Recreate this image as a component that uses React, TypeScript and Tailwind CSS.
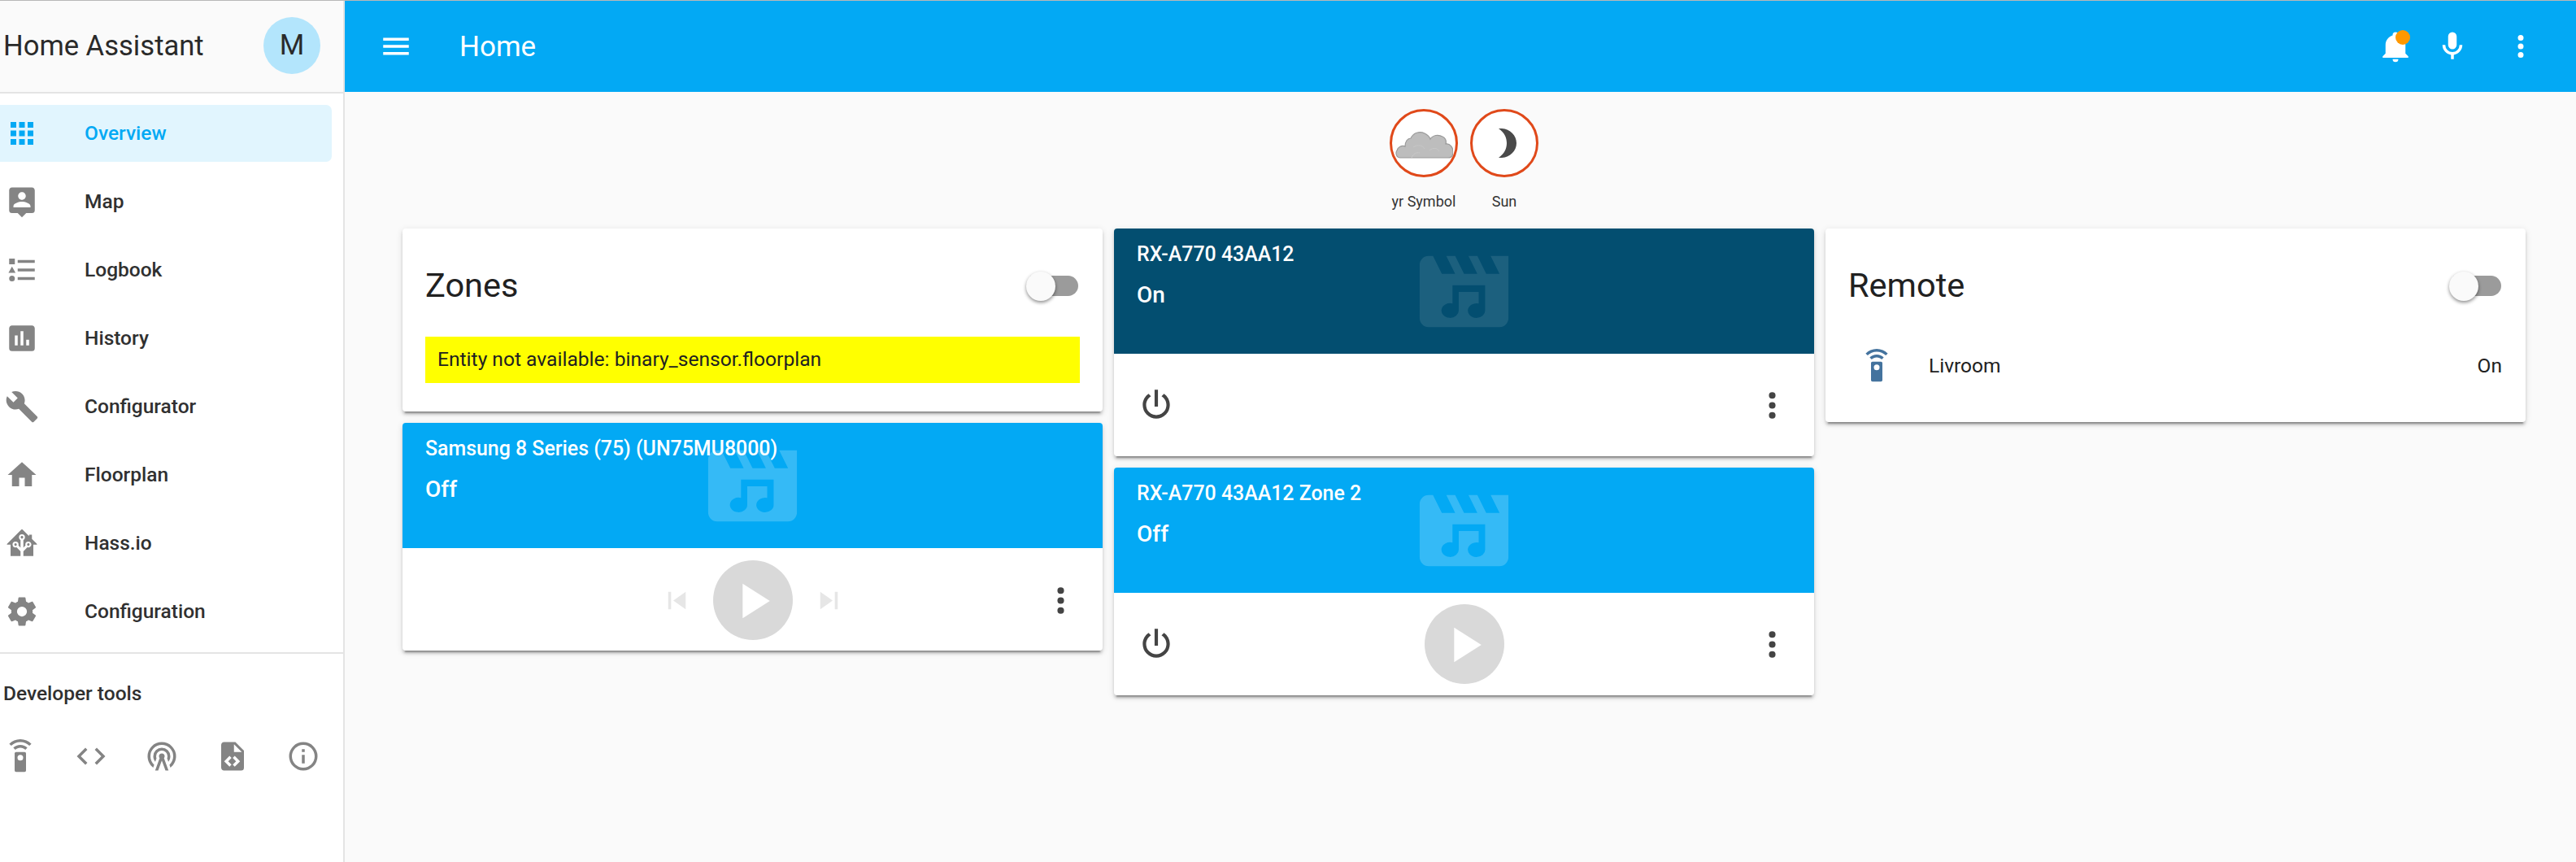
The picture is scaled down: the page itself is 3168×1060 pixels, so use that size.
import React from "react";

const P = {
  apps: "M16,20H20V16H16M16,14H20V10H16M10,8H14V4H10M16,8H20V4H16M10,14H14V10H10M4,14H8V10H4M4,20H8V16H4M10,20H14V16H10M4,8H8V4H4V8Z",
  map: "M18,16H6V15.1C6,13.1 10,12 12,12C14,12 18,13.1 18,15.1M12,5.3C13.5,5.3 14.7,6.5 14.7,8C14.7,9.5 13.5,10.7 12,10.7C10.5,10.7 9.3,9.5 9.3,8C9.3,6.5 10.5,5.3 12,5.3M19,2H5C3.89,2 3,2.89 3,4V18A2,2 0 0,0 5,20H9L12,23L15,20H19A2,2 0 0,0 21,18V4C21,2.89 20.1,2 19,2Z",
  list: "M5,9.5L7.5,14H2.5L5,9.5M3,4H7V8H3V4M5,20A2,2 0 0,0 7,18A2,2 0 0,0 5,16A2,2 0 0,0 3,18A2,2 0 0,0 5,20M9,5V7H21V5H9M9,19H21V17H9V19M9,13H21V11H9V13Z",
  poll: "M17,17H15V13H17M13,17H11V7H13M9,17H7V10H9M19,3H5C3.89,3 3,3.89 3,5V19A2,2 0 0,0 5,21H19A2,2 0 0,0 21,19V5C21,3.89 20.1,3 19,3Z",
  wrench: "M22.7,19L13.6,9.9C14.5,7.6 14,4.9 12.1,3C10.1,1 7.1,0.6 4.7,1.7L9,6L6,9L1.6,4.7C0.4,7.1 0.9,10.1 2.9,12.1C4.8,14 7.5,14.5 9.8,13.6L18.9,22.7C19.3,23.1 19.9,23.1 20.3,22.7L22.6,20.4C23.1,20 23.1,19.3 22.7,19Z",
  home: "M10,20V14H14V20H19V12H22L12,3L2,12H5V20H10Z",
  hass: "M21.8,13H20V21H13V17.67L15.79,14.88L16.5,15C17.66,15 18.6,14.06 18.6,12.9C18.6,11.74 17.66,10.8 16.5,10.8A2.1,2.1 0 0,0 14.4,12.9L14.5,13.61L13,15.13V9.65C13.66,9.29 14.1,8.6 14.1,7.8A2.1,2.1 0 0,0 12,5.7A2.1,2.1 0 0,0 9.9,7.8C9.9,8.6 10.34,9.29 11,9.65V15.13L9.5,13.61L9.6,12.9A2.1,2.1 0 0,0 7.5,10.8A2.1,2.1 0 0,0 5.4,12.9A2.1,2.1 0 0,0 7.5,15L8.21,14.88L11,17.67V21H4V13H2.25C1.83,13 1.42,13 1.42,12.79C1.43,12.57 1.85,12.15 2.28,11.72L11,3C11.33,2.67 11.67,2.33 12,2.33C12.33,2.33 12.67,2.67 13,3L17,7V6H19V9L21.78,11.78C22.18,12.18 22.59,12.59 22.6,12.8C22.6,13 22.2,13 21.8,13M7.5,12A0.9,0.9 0 0,1 8.4,12.9A0.9,0.9 0 0,1 7.5,13.8A0.9,0.9 0 0,1 6.6,12.9A0.9,0.9 0 0,1 7.5,12M16.5,12C17,12 17.4,12.4 17.4,12.9C17.4,13.4 17,13.8 16.5,13.8A0.9,0.9 0 0,1 15.6,12.9A0.9,0.9 0 0,1 16.5,12M12,6.9C12.5,6.9 12.9,7.3 12.9,7.8C12.9,8.3 12.5,8.7 12,8.7C11.5,8.7 11.1,8.3 11.1,7.8C11.1,7.3 11.5,6.9 12,6.9Z",
  gear: "M12,15.5A3.5,3.5 0 0,1 8.5,12A3.5,3.5 0 0,1 12,8.5A3.5,3.5 0 0,1 15.5,12A3.5,3.5 0 0,1 12,15.5M19.43,12.97C19.47,12.65 19.5,12.33 19.5,12C19.5,11.67 19.47,11.34 19.43,11L21.54,9.37C21.73,9.22 21.78,8.95 21.66,8.73L19.66,5.27C19.54,5.05 19.27,4.96 19.05,5.05L16.56,6.05C16.04,5.66 15.5,5.32 14.87,5.07L14.5,2.42C14.46,2.18 14.25,2 14,2H10C9.75,2 9.54,2.18 9.5,2.42L9.13,5.07C8.5,5.32 7.96,5.66 7.44,6.05L4.95,5.05C4.73,4.96 4.46,5.05 4.34,5.27L2.34,8.73C2.21,8.95 2.27,9.22 2.46,9.37L4.57,11C4.53,11.34 4.5,11.67 4.5,12C4.5,12.33 4.53,12.65 4.57,12.97L2.46,14.63C2.27,14.78 2.21,15.05 2.34,15.27L4.34,18.73C4.46,18.95 4.73,19.03 4.95,18.95L7.44,17.94C7.96,18.34 8.5,18.68 9.13,18.93L9.5,21.58C9.54,21.82 9.75,22 10,22H14C14.25,22 14.46,21.82 14.5,21.58L14.87,18.93C15.5,18.67 16.04,18.34 16.56,17.94L19.05,18.95C19.27,19.03 19.54,18.95 19.66,18.73L21.66,15.27C21.78,15.05 21.73,14.78 21.54,14.63L19.43,12.97Z",
  remote: "M12,0C8.96,0 6.21,1.23 4.22,3.22L5.63,4.63C7.26,3 9.5,2 12,2C14.5,2 16.74,3 18.36,4.64L19.78,3.22C17.79,1.23 15.04,0 12,0M7.05,6.05L8.46,7.46C9.37,6.56 10.62,6 12,6C13.38,6 14.63,6.56 15.54,7.46L16.95,6.05C15.68,4.78 13.93,4 12,4C10.07,4 8.32,4.78 7.05,6.05M12,15A2,2 0 0,1 10,13A2,2 0 0,1 12,11A2,2 0 0,1 14,13A2,2 0 0,1 12,15M15,9H9A1,1 0 0,0 8,10V22A1,1 0 0,0 9,23H15A1,1 0 0,0 16,22V10A1,1 0 0,0 15,9Z",
  code: "M14.6,16.6L19.2,12L14.6,7.4L16,6L22,12L16,18L14.6,16.6M9.4,16.6L4.8,12L9.4,7.4L8,6L2,12L8,18L9.4,16.6Z",
  tower: "M12,10A2,2 0 0,1 14,12C14,12.5 13.82,12.94 13.53,13.29L16.7,22H14.57L12,14.93L9.43,22H7.3L10.47,13.29C10.18,12.94 10,12.5 10,12A2,2 0 0,1 12,10M12,8A4,4 0 0,0 8,12C8,12.5 8.1,13 8.28,13.46L7.4,15.86C6.53,14.81 6,13.47 6,12A6,6 0 0,1 12,6A6,6 0 0,1 18,12C18,13.47 17.47,14.81 16.6,15.86L15.72,13.46C15.9,13 16,12.5 16,12A4,4 0 0,0 12,8M12,4A8,8 0 0,0 4,12C4,14.36 5,16.5 6.64,17.94L5.92,19.94C3.54,18.11 2,15.23 2,12A10,10 0 0,1 12,2A10,10 0 0,1 22,12C22,15.23 20.46,18.11 18.08,19.94L17.36,17.94C19,16.5 20,14.36 20,12A8,8 0 0,0 12,4Z",
  xml: "M13,9H18.5L13,3.5V9M6,2H14L20,8V20A2,2 0 0,1 18,22H6C4.89,22 4,21.1 4,20V4C4,2.89 4.89,2 6,2M6.12,15.5L9.86,19.24L11.28,17.83L8.95,15.5L11.28,13.17L9.86,11.76L6.12,15.5M17.28,15.5L13.54,11.76L12.12,13.17L14.45,15.5L12.12,17.83L13.54,19.24L17.28,15.5Z",
  info: "M11,9H13V7H11M12,20C7.59,20 4,16.41 4,12C4,7.59 7.59,4 12,4C16.41,4 20,7.59 20,12C20,16.41 16.41,20 12,20M12,2A10,10 0 0,0 2,12A10,10 0 0,0 12,22A10,10 0 0,0 22,12A10,10 0 0,0 12,2M11,17H13V11H11V17Z",
  menu: "M3,6H21V8H3V6M3,11H21V13H3V11M3,16H21V18H3V16Z",
  bell: "M21,19V20H3V19L5,17V11C5,7.9 7.03,5.17 10,4.29C10,4.19 10,4.1 10,4A2,2 0 0,1 12,2A2,2 0 0,1 14,4C14,4.1 14,4.19 14,4.29C16.97,5.17 19,7.9 19,11V17L21,19M14,21A2,2 0 0,1 12,23A2,2 0 0,1 10,21",
  mic: "M12,2A3,3 0 0,1 15,5V11A3,3 0 0,1 12,14A3,3 0 0,1 9,11V5A3,3 0 0,1 12,2M19,11C19,14.53 16.39,17.44 13,17.93V21H11V17.93C7.61,17.44 5,14.53 5,11H7A5,5 0 0,0 12,16A5,5 0 0,0 17,11H19Z",
  dots: "M12,16A2,2 0 0,1 14,18A2,2 0 0,1 12,20A2,2 0 0,1 10,18A2,2 0 0,1 12,16M12,10A2,2 0 0,1 14,12A2,2 0 0,1 12,14A2,2 0 0,1 10,12A2,2 0 0,1 12,10M12,4A2,2 0 0,1 14,6A2,2 0 0,1 12,8A2,2 0 0,1 10,6A2,2 0 0,1 12,4Z",
  power: "M16.56,5.44L15.11,6.89C16.84,7.94 18,9.83 18,12A6,6 0 0,1 12,18A6,6 0 0,1 6,12C6,9.83 7.16,7.94 8.88,6.88L7.44,5.44C5.36,6.88 4,9.28 4,12A8,8 0 0,0 12,20A8,8 0 0,0 20,12C20,9.28 18.64,6.88 16.56,5.44M13,3H11V13H13",
  play: "M8,5.14V19.14L19,12.14L8,5.14Z",
  prev: "M6,18V6H8V18H6M9.5,12L18,6V18L9.5,12Z",
  next: "M16,18H18V6H16M6,18L14.5,12L6,6V18Z",
  cover:
    "M18,4L20,8H17L15,4H13L15,8H12L10,4H8L10,8H7L5,4H4A2,2 0 0,0 2,6V18A2,2 0 0,0 4,20H20A2,2 0 0,0 22,18V4H18Z" +
    "M9.4,10.6H16.75V16.2A1.95,1.65 0 1 1 15.3,14.7V12.1H10.8V16.2A1.95,1.65 0 1 1 9.4,14.7Z",
};

function Ic({ d, className = "w-[42px] h-[42px]" }: { d: string; className?: string }) {
  return (
    <svg viewBox="0 0 24 24" fill="currentColor" fillRule="evenodd" className={`shrink-0 ${className}`}>
      <path d={d} />
    </svg>
  );
}

const nav = [
  ["Overview", P.apps],
  ["Map", P.map],
  ["Logbook", P.list],
  ["History", P.poll],
  ["Configurator", P.wrench],
  ["Floorplan", P.home],
  ["Hass.io", P.hass],
  ["Configuration", P.gear],
];

function Sidebar() {
  return (
    <aside className="w-[424px] shrink-0 bg-white border-r-2 border-[#e4e4e4] flex flex-col">
      <div className="h-[114px] shrink-0 bg-[#fafafa] border-b-2 border-[#e4e4e4] flex items-center justify-between pl-[4px] pr-[28px] pb-[2px]">
        <span className="text-[34.6px] leading-none text-[#2a2a2a]">Home Assistant</span>
        <span className="w-[70px] h-[70px] rounded-full bg-[#b3e5fc] flex items-center justify-center text-[35px] text-[#2a2a2a]">M</span>
      </div>
      <nav className="mt-[14px] flex flex-col gap-[14px]">
        {nav.map(([label, d], i) => (
          <div
            key={label}
            className={
              i === 0
                ? "w-[408px] h-[70px] flex items-center gap-[56px] pl-[6px] rounded-r-[7px] bg-[#e1f5fe] text-[#03a9f4]"
                : "w-[408px] h-[70px] flex items-center gap-[56px] pl-[6px] text-[#303030]"
            }
          >
            <span className={i === 0 ? "text-[#03a9f4]" : "text-[#848484]"}>
              <Ic d={d} />
            </span>
            <span className="text-[24.5px] font-medium leading-none">{label}</span>
          </div>
        ))}
      </nav>
      <div className="mt-[15px] h-[2px] bg-[#e4e4e4]" />
      <div className="mt-[34px] pl-[4px] text-[24.5px] font-medium leading-[30px] text-[#303030]">Developer tools</div>
      <div className="mt-[41px] pl-[4px] flex gap-[45px] text-[#848484]">
        <Ic d={P.remote} />
        <Ic d={P.code} />
        <Ic d={P.tower} />
        <Ic d={P.xml} />
        <Ic d={P.info} />
      </div>
    </aside>
  );
}

function TopBar() {
  return (
    <header className="h-[112px] shrink-0 bg-[#03a9f4] text-white flex items-center pl-[42px] pr-[47px]">
      <Ic d={P.menu} />
      <span className="ml-[57px] text-[35px] leading-none">Home</span>
      <div className="ml-auto flex items-center">
        <span className="relative block">
          <Ic d={P.bell} />
          <span className="absolute left-[21px] top-[1px] w-[18px] h-[18px] rounded-full bg-[#ff9800]" />
        </span>
        <span className="ml-[28px]">
          <Ic d={P.mic} />
        </span>
        <span className="ml-[42px]">
          <Ic d={P.dots} />
        </span>
      </div>
    </header>
  );
}

function Badge({ label, children }: { label: string; children: React.ReactNode }) {
  return (
    <div className="w-[84px] flex flex-col items-center">
      <div className="w-[84px] h-[84px] rounded-full border-[3.5px] border-[#e0491a] bg-white flex items-center justify-center">
        {children}
      </div>
      <div className="mt-[20px] text-[18px] leading-[20px] text-[#333] whitespace-nowrap">{label}</div>
    </div>
  );
}

const cardCls =
  "w-[861px] rounded-[4px] bg-white overflow-hidden shadow-[0_3.5px_3.5px_0_rgba(0,0,0,0.14),0_2px_9px_0_rgba(0,0,0,0.12),0_5px_2px_-3.5px_rgba(0,0,0,0.3)]";

function Toggle() {
  return (
    <div className="relative w-[59px] h-[25px] mr-[2px] rounded-r-full bg-[#9b9b9b]">
      <span className="absolute left-[-5px] top-[-5px] w-[36px] h-[36px] rounded-full bg-[#fafafa] shadow-[0_2px_4px_rgba(0,0,0,0.45)]" />
    </div>
  );
}

function TitleRow({ title }: { title: string }) {
  return (
    <div className="h-[133px] px-[28px] pt-[45px] flex items-start justify-between">
      <div className="h-[50px] leading-[50px] text-[41.5px] text-[#212121]">{title}</div>
      <div className="h-[50px] flex items-center">
        <Toggle />
      </div>
    </div>
  );
}

function Media({
  title,
  state,
  dark,
  children,
  bottomCls,
}: {
  title: string;
  state: string;
  dark?: boolean;
  children: React.ReactNode;
  bottomCls: string;
}) {
  return (
    <div className={cardCls}>
      <div className={dark ? "relative h-[154px] bg-[#034e70] text-white" : "relative h-[154px] bg-[#03a9f4] text-white"}>
        <div className="absolute inset-0 flex items-center justify-center">
          <span className={dark ? "text-white/10" : "text-white/20"}>
            <Ic d={P.cover} className="w-[131px] h-[131px]" />
          </span>
        </div>
        <div className="relative px-[28px] pt-[17px]">
          <div className="text-[24.9px] font-medium leading-[30px]">{title}</div>
          <div className="mt-[15px] text-[28px] font-medium leading-[40px]">{state}</div>
        </div>
      </div>
      <div className={`${bottomCls} grid grid-cols-[1fr_auto_1fr] items-center`}>{children}</div>
    </div>
  );
}

function PowerCell() {
  return (
    <div className="pl-[27px] text-[#444]">
      <Ic d={P.power} className="w-[50px] h-[50px]" />
    </div>
  );
}

function DotsCell() {
  return (
    <div className="pr-[27px] flex justify-end text-[#444]">
      <Ic d={P.dots} className="w-[49px] h-[49px]" />
    </div>
  );
}

function PlayCircle() {
  return (
    <div className="w-[98px] h-[98px] rounded-full bg-[#d9d9d9] text-white flex items-center justify-center">
      <Ic d={P.play} className="w-[73px] h-[73px]" />
    </div>
  );
}

export default function App() {
  return (
    <div className="w-[3168px] h-[1060px] overflow-hidden flex border-t border-[#b8b8b8] bg-[#fafafa] font-[Roboto,sans-serif]">
      <Sidebar />
      <main className="flex-1 min-w-0 flex flex-col">
        <TopBar />
        <div className="pl-[9px]">
          <div className="pt-[21px] flex justify-center gap-[15px]">
            <Badge label="yr Symbol">
              <svg viewBox="0 0 71 34" className="w-[71px] h-[34px] mt-[3px]">
                <path
                  d="M6 33C1 33 0 27 2 24C3 20 8 17 12 19C12 13 15 9 19 9C22 2 30 0 36 3C40 5 42 7 43 10C46 5 53 4 58 7C62 9 63 12 62 16C67 15 71 20 71 26C71 30 69 33 65 33Z"
                  fill="#bdbdbd"
                  stroke="#9a9a9a"
                  strokeWidth="1.2"
                />
                <path d="M22 20C28 16 34 18 36 22M42 24C46 20 52 21 54 25M20 33C22 28 26 26 30 27" fill="none" stroke="#c8c8c8" strokeWidth="1" />
              </svg>
            </Badge>
            <Badge label="Sun">
              <svg viewBox="0 0 22 36" className="w-[22px] h-[36px] ml-[8px]">
                <path d="M0 0C12 -1 22 7 22 18C22 29 12 37 0 36C7 31 10 25 10 18C10 11 7 5 0 0Z" fill="#4a4a4a" />
              </svg>
            </Badge>
          </div>
          <div className="mt-[23px] flex justify-center gap-[14px] items-start">
            <div className="flex flex-col gap-[14px]">
              <div className={cardCls}>
                <TitleRow title="Zones" />
                <div className="mx-[28px] mb-[35px] h-[57px] bg-[#ffff00] px-[15px] flex items-center text-[24.6px] text-[#212121]">
                  Entity not available: binary_sensor.floorplan
                </div>
              </div>
              <Media title="Samsung 8 Series (75) (UN75MU8000)" state="Off" bottomCls="h-[126px] pt-[2px]">
                <div />
                <div className="flex items-center gap-[23px]">
                  <span className="text-[#e6e6e6]">
                    <Ic d={P.prev} className="w-[43px] h-[43px]" />
                  </span>
                  <PlayCircle />
                  <span className="text-[#e6e6e6]">
                    <Ic d={P.next} className="w-[43px] h-[43px]" />
                  </span>
                </div>
                <DotsCell />
              </Media>
            </div>
            <div className="flex flex-col gap-[14px]">
              <Media title="RX-A770 43AA12" state="On" dark bottomCls="h-[126px]">
                <PowerCell />
                <div />
                <DotsCell />
              </Media>
              <Media title="RX-A770 43AA12 Zone 2" state="Off" bottomCls="h-[126px]">
                <PowerCell />
                <PlayCircle />
                <DotsCell />
              </Media>
            </div>
            <div className={cardCls}>
              <TitleRow title="Remote" />
              <div className="h-[70px] mt-[1px] mb-[34px] pl-[42px] pr-[29px] flex items-center text-[24.5px] text-[#212121]">
                <span className="text-[#44739e]">
                  <Ic d={P.remote} />
                </span>
                <span className="ml-[43px]">Livroom</span>
                <span className="ml-auto">On</span>
              </div>
            </div>
          </div>
        </div>
      </main>
    </div>
  );
}
